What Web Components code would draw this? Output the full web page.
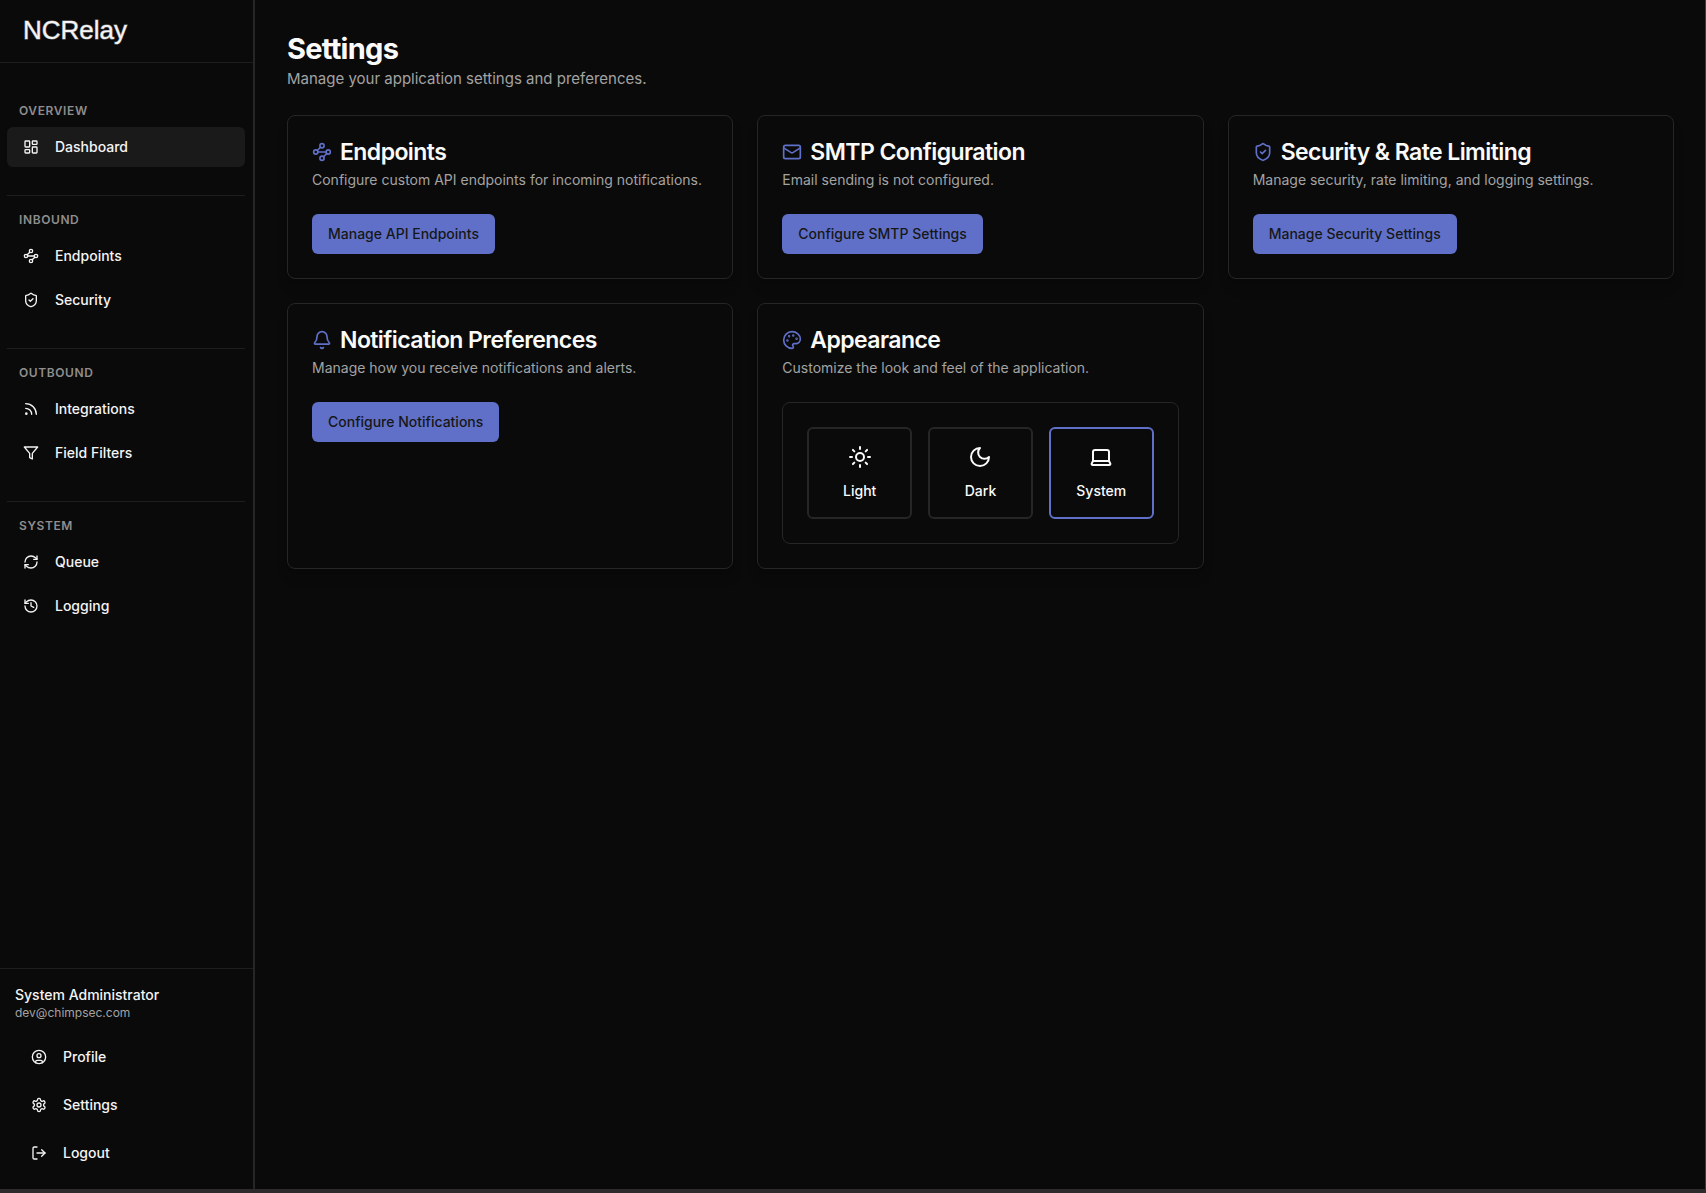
<!DOCTYPE html>
<html lang="en">
<head>
<meta charset="utf-8">
<meta name="viewport" content="width=device-width, initial-scale=1">
<title>NCRelay – Settings</title>
<style>
  :root {
    --bg: #0a0a0a;
    --fg: #fafafa;
    --nav-fg: #f4f4f5;
    --muted: #a3a3a3;
    --muted-dim: #8e8e8e;
    --border: #262626;
    --hairline: #1e1e1e;
    --active: #1a1a1a;
    --primary: #6070c8;
    --on-primary: #171717;
  }
  html, body { height: 100%; }
  body {
    margin: 0;
    background: var(--bg);
    color: var(--fg);
    font: 400 14px/20px Inter, "Noto Sans", sans-serif;
  }
</style>
</head>
<body>
<relay-app>
  <relay-sidebar slot="sidebar">
    <nav-section label="Overview">
      <nav-link icon="dashboard" href="#dashboard" active>Dashboard</nav-link>
    </nav-section>
    <nav-section label="Inbound">
      <nav-link icon="waypoints" href="#endpoints">Endpoints</nav-link>
      <nav-link icon="shield" href="#security">Security</nav-link>
    </nav-section>
    <nav-section label="Outbound">
      <nav-link icon="rss" href="#integrations">Integrations</nav-link>
      <nav-link icon="filter" href="#filters">Field Filters</nav-link>
    </nav-section>
    <nav-section label="System">
      <nav-link icon="refresh" href="#queue">Queue</nav-link>
      <nav-link icon="history" href="#logging">Logging</nav-link>
    </nav-section>
    <user-panel slot="footer" name="System Administrator" email="dev@chimpsec.com">
      <nav-link icon="user" href="#profile">Profile</nav-link>
      <nav-link icon="gear" href="#settings">Settings</nav-link>
      <nav-link icon="logout" href="#logout">Logout</nav-link>
    </user-panel>
  </relay-sidebar>

  <page-header heading="Settings">Manage your application settings and preferences.</page-header>
  <card-grid>
    <settings-card icon="waypoints" heading="Endpoints" description="Configure custom API endpoints for incoming notifications.">
      <action-button>Manage API Endpoints</action-button>
    </settings-card>
    <settings-card icon="mail" heading="SMTP Configuration" description="Email sending is not configured.">
      <action-button>Configure SMTP Settings</action-button>
    </settings-card>
    <settings-card icon="shield" heading="Security &amp; Rate Limiting" description="Manage security, rate limiting, and logging settings.">
      <action-button>Manage Security Settings</action-button>
    </settings-card>
    <settings-card icon="bell" heading="Notification Preferences" description="Manage how you receive notifications and alerts.">
      <action-button>Configure Notifications</action-button>
    </settings-card>
    <settings-card icon="palette" heading="Appearance" description="Customize the look and feel of the application.">
      <theme-picker value="system"></theme-picker>
    </settings-card>
  </card-grid>
</relay-app>

<script>
const ICONS = {
  dashboard: '<rect width="7" height="9" x="3" y="3" rx="1"/><rect width="7" height="5" x="14" y="3" rx="1"/><rect width="7" height="9" x="14" y="12" rx="1"/><rect width="7" height="5" x="3" y="16" rx="1"/>',
  waypoints: '<circle cx="12" cy="4.5" r="2.5"/><path d="m10.2 6.3-3.9 3.9"/><circle cx="4.5" cy="12" r="2.5"/><path d="M7 12h10"/><circle cx="19.5" cy="12" r="2.5"/><path d="m13.8 17.7 3.9-3.9"/><circle cx="12" cy="19.5" r="2.5"/>',
  shield: '<path d="M20 13c0 5-3.5 7.5-7.66 8.95a1 1 0 0 1-.67-.01C7.5 20.5 4 18 4 13V6a1 1 0 0 1 1-1c2 0 4.5-1.2 6.24-2.72a1.17 1.17 0 0 1 1.52 0C14.51 3.81 17 5 19 5a1 1 0 0 1 1 1z"/><path d="m9 12 2 2 4-4"/>',
  rss: '<path d="M4 11a9 9 0 0 1 9 9"/><path d="M4 4a16 16 0 0 1 16 16"/><circle cx="5" cy="19" r="1"/>',
  filter: '<polygon points="22 3 2 3 10 12.46 10 19 14 21 14 12.46 22 3"/>',
  refresh: '<path d="M3 12a9 9 0 0 1 9-9 9.75 9.75 0 0 1 6.74 2.74L21 8"/><path d="M21 3v5h-5"/><path d="M21 12a9 9 0 0 1-9 9 9.75 9.75 0 0 1-6.74-2.74L3 16"/><path d="M8 16H3v5"/>',
  history: '<path d="M3 12a9 9 0 1 0 9-9 9.75 9.75 0 0 0-6.74 2.74L3 8"/><path d="M3 3v5h5"/><path d="M12 7v5l4 2"/>',
  user: '<circle cx="12" cy="12" r="10"/><circle cx="12" cy="10" r="3"/><path d="M7 20.662V19a2 2 0 0 1 2-2h6a2 2 0 0 1 2 2v1.662"/>',
  gear: '<path d="M12.22 2h-.44a2 2 0 0 0-2 2v.18a2 2 0 0 1-1 1.73l-.43.25a2 2 0 0 1-2 0l-.15-.08a2 2 0 0 0-2.73.73l-.22.38a2 2 0 0 0 .73 2.73l.15.1a2 2 0 0 1 1 1.72v.51a2 2 0 0 1-1 1.74l-.15.09a2 2 0 0 0-.73 2.73l.22.38a2 2 0 0 0 2.73.73l.15-.08a2 2 0 0 1 2 0l.43.25a2 2 0 0 1 1 1.73V20a2 2 0 0 0 2 2h.44a2 2 0 0 0 2-2v-.18a2 2 0 0 1 1-1.73l.43-.25a2 2 0 0 1 2 0l.15.08a2 2 0 0 0 2.73-.73l.22-.39a2 2 0 0 0-.73-2.73l-.15-.08a2 2 0 0 1-1-1.74v-.5a2 2 0 0 1 1-1.74l.15-.09a2 2 0 0 0 .73-2.73l-.22-.38a2 2 0 0 0-2.73-.73l-.15.08a2 2 0 0 1-2 0l-.43-.25a2 2 0 0 1-1-1.73V4a2 2 0 0 0-2-2z"/><circle cx="12" cy="12" r="3"/>',
  logout: '<path d="m16 17 5-5-5-5"/><path d="M21 12H9"/><path d="M9 21H5a2 2 0 0 1-2-2V5a2 2 0 0 1 2-2h4"/>',
  mail: '<rect width="20" height="16" x="2" y="4" rx="2"/><path d="m22 7-8.97 5.7a1.94 1.94 0 0 1-2.06 0L2 7"/>',
  bell: '<path d="M10.268 21a2 2 0 0 0 3.464 0"/><path d="M3.262 15.326A1 1 0 0 0 4 17h16a1 1 0 0 0 .74-1.673C19.41 13.956 18 12.499 18 8A6 6 0 0 0 6 8c0 4.499-1.411 5.956-2.738 7.326"/>',
  palette: '<circle cx="13.5" cy="6.5" r=".5" fill="currentColor"/><circle cx="17.5" cy="10.5" r=".5" fill="currentColor"/><circle cx="8.5" cy="7.5" r=".5" fill="currentColor"/><circle cx="6.5" cy="12.5" r=".5" fill="currentColor"/><path d="M12 2C6.5 2 2 6.5 2 12s4.5 10 10 10c.926 0 1.648-.746 1.648-1.688 0-.437-.18-.835-.437-1.125-.29-.289-.438-.652-.438-1.125a1.64 1.64 0 0 1 1.668-1.668h1.996c3.051 0 5.555-2.503 5.555-5.554C21.965 6.012 17.461 2 12 2z"/>',
  sun: '<circle cx="12" cy="12" r="4"/><path d="M12 2v2"/><path d="M12 20v2"/><path d="m4.93 4.93 1.41 1.41"/><path d="m17.66 17.66 1.41 1.41"/><path d="M2 12h2"/><path d="M20 12h2"/><path d="m6.34 17.66-1.41 1.41"/><path d="m19.07 4.93-1.41 1.41"/>',
  moon: '<path d="M12 3a6 6 0 0 0 9 9 9 9 0 1 1-9-9Z"/>',
  laptop: '<path d="M20 16V7a2 2 0 0 0-2-2H6a2 2 0 0 0-2 2v9m16 0H4m16 0 1.28 2.55a1 1 0 0 1-.9 1.45H3.62a1 1 0 0 1-.9-1.45L4 16"/>'
};

class BaseElement extends HTMLElement {
  connectedCallback() {
    if (this.shadowRoot) return;
    this.attachShadow({ mode: 'open' }).innerHTML =
      `<style>*, ::before, ::after { box-sizing: border-box; } ${this.styles()}</style>${this.markup()}`;
  }
  text(name) {
    const span = document.createElement('span');
    span.textContent = this.getAttribute(name) || '';
    return span.innerHTML;
  }
}

customElements.define('relay-icon', class extends BaseElement {
  styles() { return `
    :host { display: block; flex: none; width: var(--icon-size, 16px); height: var(--icon-size, 16px); }
    svg { display: block; width: 100%; height: 100%; }`; }
  markup() { return `<svg viewBox="0 0 24 24" fill="none" stroke="currentColor" stroke-width="2" stroke-linecap="round" stroke-linejoin="round" aria-hidden="true">${ICONS[this.getAttribute('name')]}</svg>`; }
});

customElements.define('relay-app', class extends BaseElement {
  styles() { return `
    :host { display: flex; box-sizing: border-box; min-height: 100vh; border-bottom: 4px solid #2d2b2c; box-shadow: inset -1px 0 #3c3c3c; }
    main { flex: 1; min-width: 0; padding: 31px 32px; display: flex; flex-direction: column; gap: 24px; }`; }
  markup() { return `<slot name="sidebar"></slot><main><slot></slot></main>`; }
});

customElements.define('relay-sidebar', class extends BaseElement {
  styles() { return `
    :host { display: flex; flex-direction: column; flex: none; box-sizing: border-box; width: 255px; border-right: 2px solid var(--border); color: var(--nav-fg); }
    header { padding: 14px 23px 16px; border-bottom: 1px solid var(--hairline); }
    .logo { display: block; color: inherit; text-decoration: none; font: 400 26px/32px "Liberation Sans", Arial, sans-serif; -webkit-text-stroke: 1px rgb(244 244 245 / .5); }
    nav { flex: 1; padding: 24px 8px 24px 7px; }`; }
  markup() { return `
    <header><a class="logo" href="#home">NCRelay</a></header>
    <nav aria-label="Main"><slot></slot></nav>
    <slot name="footer"></slot>`; }
});

customElements.define('nav-section', class extends BaseElement {
  styles() { return `
    :host { display: block; border-top: 1px solid var(--hairline); padding: 16px 0 28px; }
    :host(:first-child) { border-top: 0; }
    h2 { margin: 0 0 8px; padding: 0 12px; font-size: 12px; line-height: 16px; font-weight: 600; letter-spacing: 0.05em; text-transform: uppercase; color: var(--muted-dim); }
    div { display: flex; flex-direction: column; gap: 4px; }`; }
  markup() { return `<h2>${this.text('label')}</h2><div><slot></slot></div>`; }
});

customElements.define('nav-link', class extends BaseElement {
  styles() { return `
    :host { display: block; }
    a { display: flex; align-items: center; gap: 16px; height: 40px; padding: 0 16px; border-radius: 6px; color: inherit; text-decoration: none; font-weight: 500; }
    :host([active]) a, a:hover { background: var(--active); }`; }
  markup() { return `<a href="${this.text('href')}"${this.hasAttribute('active') ? ' aria-current="page"' : ''}><relay-icon name="${this.text('icon')}"></relay-icon><slot></slot></a>`; }
});

customElements.define('user-panel', class extends BaseElement {
  styles() { return `
    :host { display: block; border-top: 1px solid var(--hairline); padding: 16px 16px 16px 15px; }
    p { margin: 0; font-weight: 500; }
    p.email { font-size: 12px; line-height: 16px; font-weight: 400; color: var(--muted); }
    div { display: flex; flex-direction: column; gap: 8px; margin-top: 16px; }`; }
  markup() { return `<p>${this.text('name')}</p><p class="email">${this.text('email')}</p><div><slot></slot></div>`; }
});

customElements.define('page-header', class extends BaseElement {
  styles() { return `
    :host { display: block; }
    h1 { margin: 0; font-size: 29px; line-height: 36px; font-weight: 700; letter-spacing: -0.025em; }
    p { margin: 0; font-size: 15px; line-height: 24px; color: var(--muted); }`; }
  markup() { return `<h1>${this.text('heading')}</h1><p><slot></slot></p>`; }
});

customElements.define('card-grid', class extends BaseElement {
  styles() { return `
    :host { display: grid; grid-template-columns: repeat(auto-fill, minmax(360px, 1fr)); gap: 24px; }`; }
  markup() { return `<slot></slot>`; }
});

customElements.define('settings-card', class extends BaseElement {
  styles() { return `
    :host { display: flex; flex-direction: column; gap: 24px; box-sizing: border-box; padding: 24px; border: 1px solid var(--border); border-radius: 8px; background: var(--bg); box-shadow: 0 10px 15px -3px rgb(0 0 0 / .1), 0 4px 6px -4px rgb(0 0 0 / .1); }
    header { display: flex; flex-direction: column; gap: 6px; }
    h2 { display: flex; align-items: center; gap: 8px; margin: 0; font-size: 23px; line-height: 24px; font-weight: 600; letter-spacing: -0.025em; }
    p { margin: 0; color: var(--muted); }
    relay-icon { --icon-size: 20px; color: var(--primary); }`; }
  markup() { return `<header><h2><relay-icon name="${this.text('icon')}"></relay-icon>${this.text('heading')}</h2><p>${this.text('description')}</p></header><div><slot></slot></div>`; }
});

customElements.define('action-button', class extends BaseElement {
  styles() { return `
    :host { display: block; }
    button { display: block; height: 40px; padding: 0 16px; border: 0; border-radius: 6px; background: var(--primary); color: var(--on-primary); font: inherit; font-weight: 500; cursor: pointer; }`; }
  markup() { return `<button type="button"><slot></slot></button>`; }
});

customElements.define('theme-picker', class extends BaseElement {
  styles() { return `
    :host { display: block; padding: 24px; border: 1px solid var(--border); border-radius: 8px; box-sizing: border-box; }
    div { display: grid; grid-template-columns: repeat(3, 1fr); gap: 16px; }
    label { position: relative; display: flex; flex-direction: column; align-items: center; gap: 12px; padding: 16px; border: 2px solid var(--border); border-radius: 6px; font-weight: 500; cursor: pointer; }
    label:has(input:checked) { border-color: var(--primary); }
    input { position: absolute; inset: 0; width: 100%; height: 100%; margin: 0; opacity: 0; cursor: pointer; }
    relay-icon { --icon-size: 24px; }`; }
  markup() {
    const value = this.getAttribute('value');
    const option = (id, icon, label) => `<label for="${id}"><input type="radio" name="theme" id="${id}" value="${id}"${id === value ? ' checked' : ''}><relay-icon name="${icon}"></relay-icon>${label}</label>`;
    return `<div role="radiogroup" aria-label="Theme">${option('light', 'sun', 'Light')}${option('dark', 'moon', 'Dark')}${option('system', 'laptop', 'System')}</div>`;
  }
});
</script>
</body>
</html>
